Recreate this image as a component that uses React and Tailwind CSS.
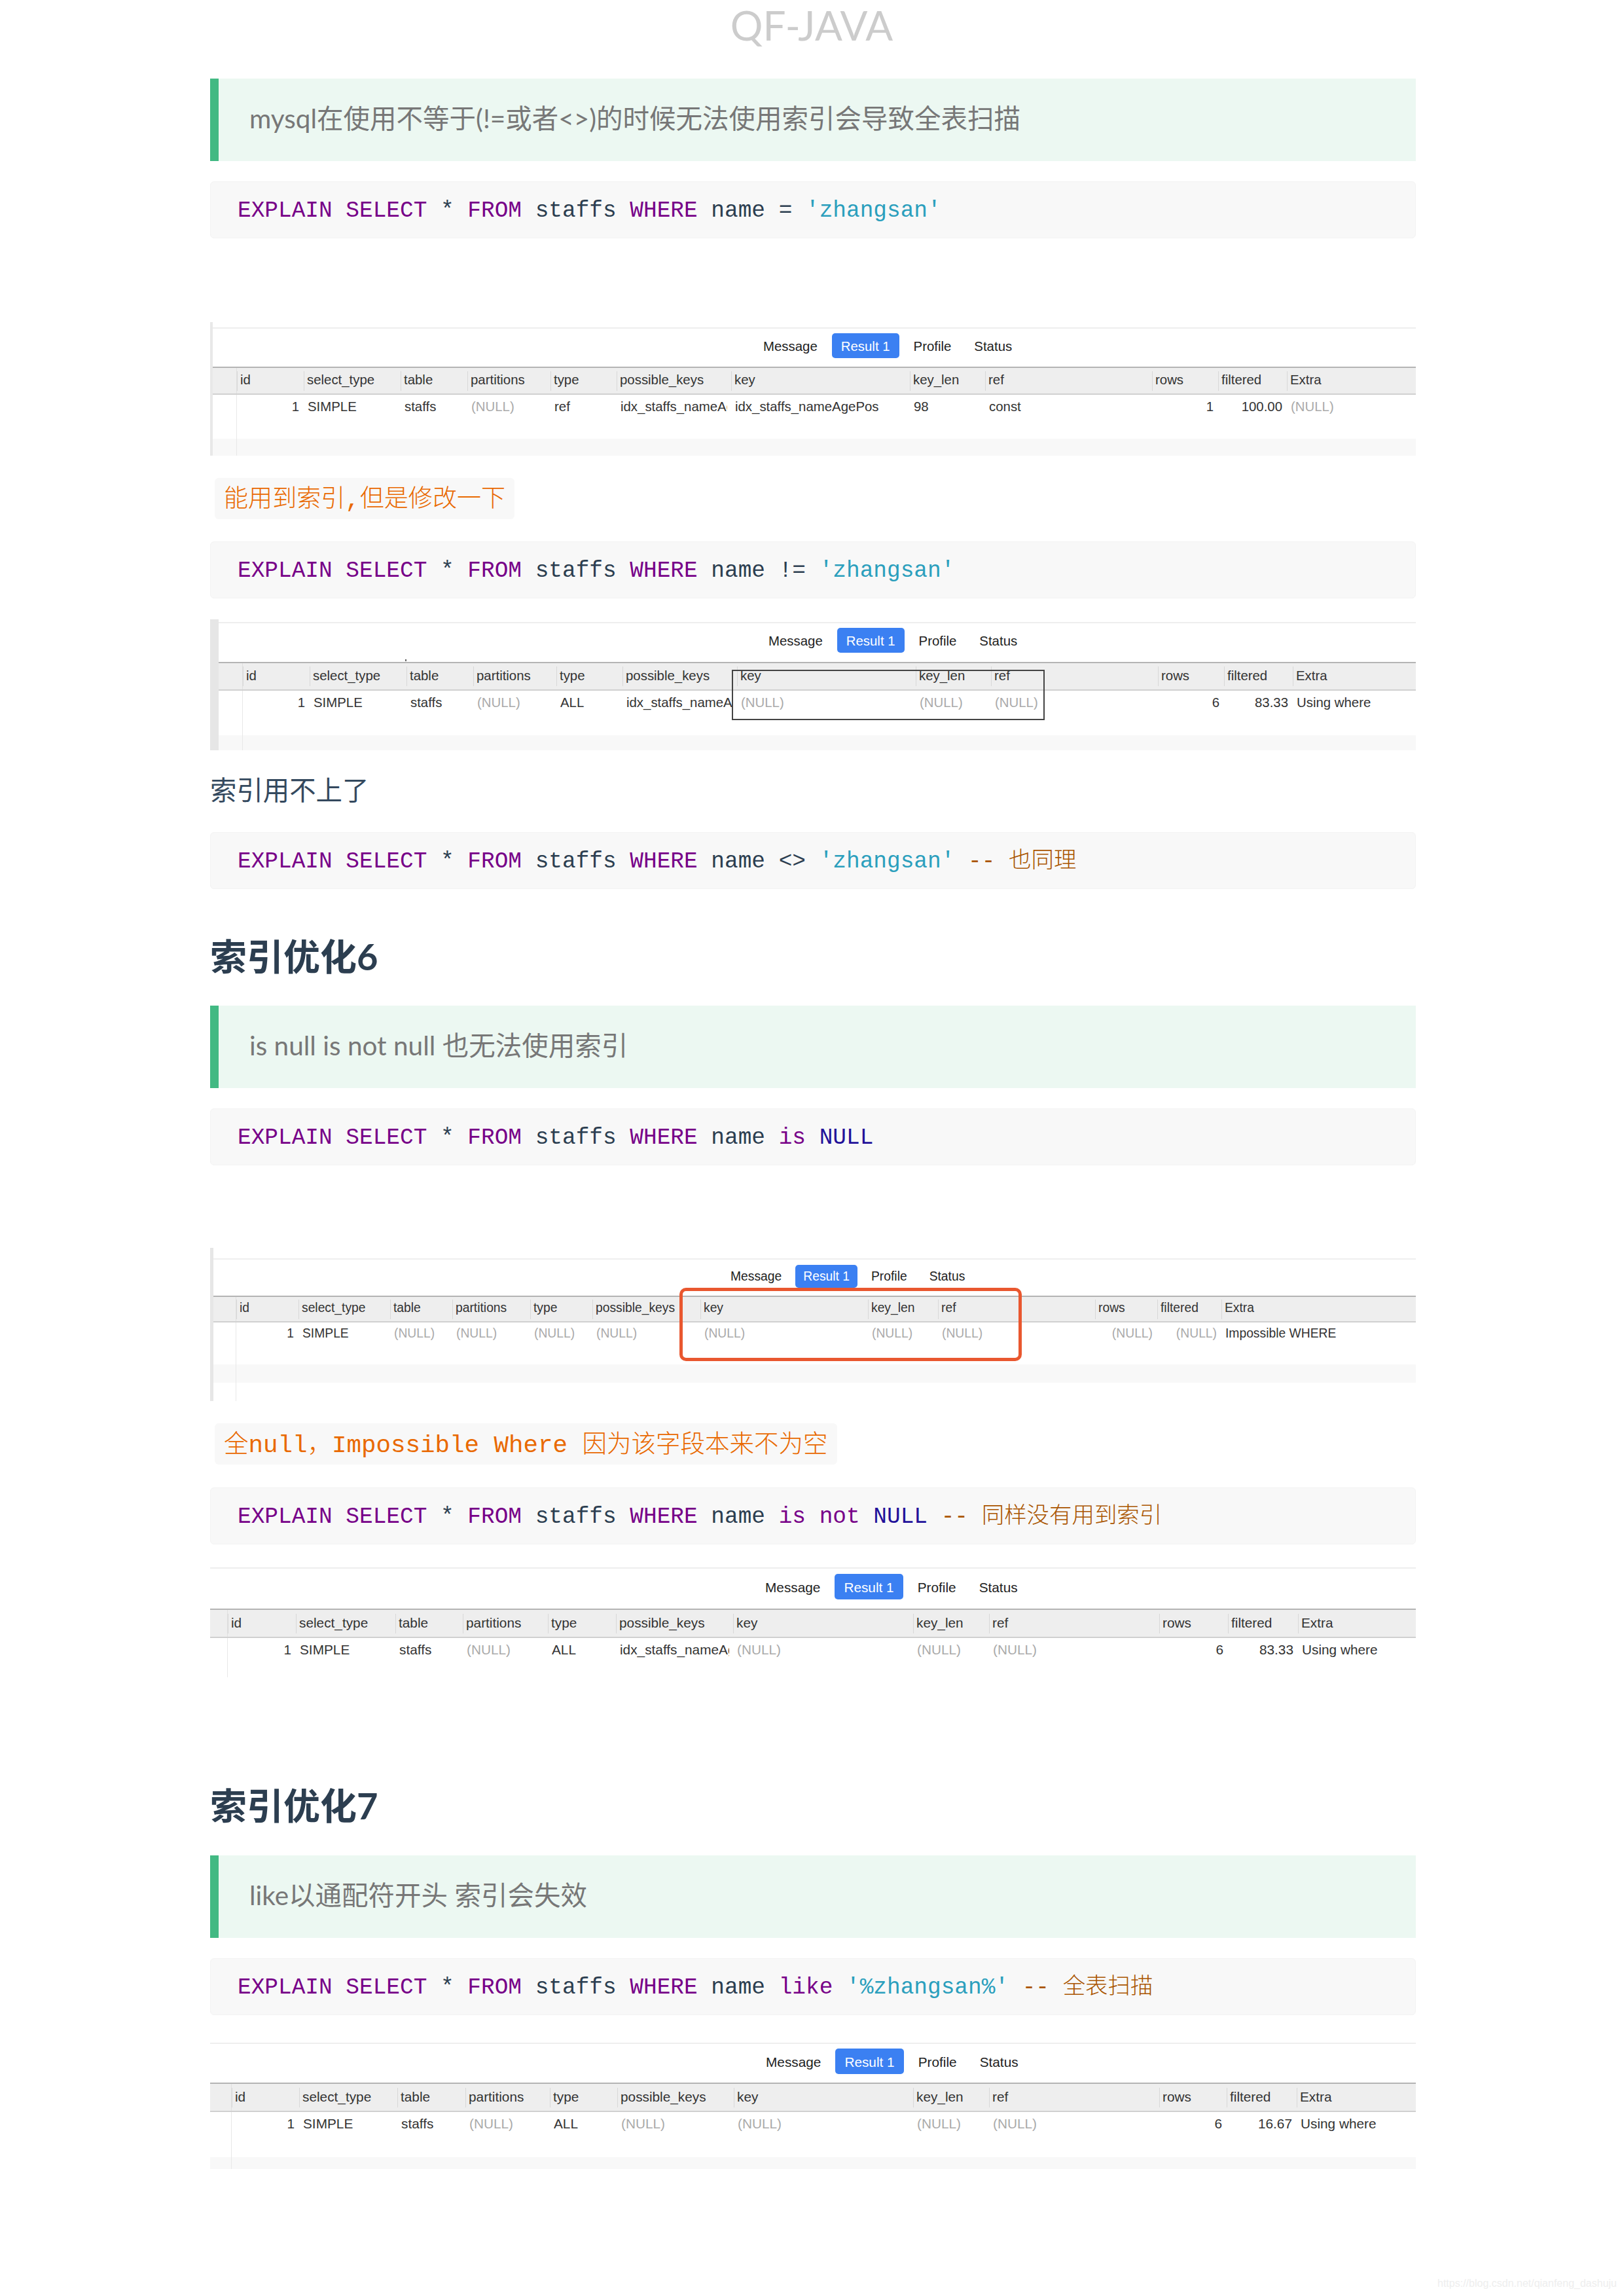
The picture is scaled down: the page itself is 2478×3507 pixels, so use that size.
import React from 'react';

const sansCn = "font-['Lato','Noto_Sans_CJK_SC',sans-serif]";
const monoCn = "font-['Liberation_Mono','Noto_Sans_CJK_SC',monospace]";

const K = ({ children }) => <span className="text-[#770088]">{children}</span>;
const S = ({ children }) => <span className="text-[#2b9fbd]">{children}</span>;
const C = ({ children }) => <span className="font-light text-[#aa5500]">{children}</span>;
const A = ({ children }) => <span className="text-[#221199]">{children}</span>;

const Code = ({ className = 'mt-[31px]', children }) => (
  <div className={`${className} ${monoCn} flex h-[87px] items-center whitespace-pre rounded-[6px] border border-[#f3f3f3] bg-[#f8f8f8] px-[41px] pt-[3px] text-[34.45px] text-[#2c3e50]`}>
    <div>{children}</div>
  </div>
);

const Quote = ({ className, children }) => (
  <div className={`${className} ${sansCn} flex h-[126px] items-center border-l-[13px] border-[#42b983] bg-[#ecf8f2] pb-[4px] pl-[47px] text-[40.5px] text-[#777777]`}>
    {children}
  </div>
);

const Heading = ({ className, children }) => (
  <h2 className={`${className} ${sansCn} flex h-[80px] items-center text-[56px] font-bold text-[#2c3e50]`}>{children}</h2>
);

const Inline = ({ className, children }) => (
  <div className={`${className} ${monoCn} ml-[7px] flex h-[63px] w-fit items-center whitespace-pre rounded-[6px] bg-[#f8f8f8] px-[14px] pt-[6px] font-light text-[#e96900]`}>
    {children}
  </div>
);

const headers = ['id', 'select_type', 'table', 'partitions', 'type', 'possible_keys', 'key', 'key_len', 'ref', 'rows', 'filtered', 'Extra'];
const rightCols = [0, 9, 10];

const Shot = ({ frame, cols, row, tabs, button, textSize, headerH, rowH, spacer, stripe, after, children }) => (
  <div className={`relative ${frame} ${textSize} font-['Liberation_Sans',sans-serif] text-[#333333]`}>
    <div className="border-t-2 border-[#eeeeee]" />
    <div className={`flex ${tabs}`}>
      <span className="self-center pt-[2px] text-[#222222]">Message</span>
      <span className={`flex items-center rounded-[5px] bg-[#3b80f2] pt-[2px] text-white ${button}`}>Result 1</span>
      <span className="self-center pt-[2px] text-[#222222]">Profile</span>
      <span className="ml-[13px] self-center pt-[2px] text-[#222222]">Status</span>
    </div>
    <div className={`grid items-center border-y-2 border-t-[#b4b4b4] border-b-[#d0d0d0] bg-[#eeeeee] ${headerH} ${cols}`}>
      <div className="h-full border-r border-[#e0e0e0]" />
      {headers.map((h) => (
        <div key={h} className="flex h-[30px] items-center overflow-hidden whitespace-nowrap border-l border-[#d8d8d8] pb-[2px] pl-[4px] first-of-type:border-l-0">
          {h}
        </div>
      ))}
    </div>
    <div className={`grid items-center ${rowH} ${cols}`}>
      <div className="h-full border-r border-[#e8e8e8]" />
      {row.map((v, i) => (
        <div
          key={i}
          className={`overflow-hidden whitespace-nowrap ${rightCols.includes(i) ? 'pr-[7px] text-right' : 'ml-[6px] mr-[6px]'} ${v === '(NULL)' ? 'text-[#aaaaaa]' : ''}`}
        >
          {v}
        </div>
      ))}
    </div>
    <div className={`grid ${spacer} ${cols}`}>
      <div className="border-r border-[#e8e8e8]" />
    </div>
    {stripe && (
      <div className={`grid bg-[#f8f8f8] ${stripe} ${cols}`}>
        <div className="border-r border-[#e8e8e8]" />
      </div>
    )}
    {after && (
      <div className={`grid ${after} ${cols}`}>
        <div className="border-r border-[#e8e8e8]" />
      </div>
    )}
    {children}
  </div>
);

const App = () => {
  return (
    <div className="relative h-[3507px] w-full overflow-hidden bg-white">
      <h1 className={`${sansCn} flex h-[76px] items-center justify-center pl-[2px] text-[62px] text-[#cccccc]`}>QF-JAVA</h1>

      <div className="ml-[321px] flex w-[1842px] flex-col">
        <Quote className="mt-[44px]">mysql在使用不等于(!=或者&lt;&gt;)的时候无法使用索引会导致全表扫描</Quote>
        <Code>
          <K>EXPLAIN SELECT</K> * <K>FROM</K> staffs <K>WHERE</K> name = <S>'zhangsan'</S>
        </Code>

        <Shot
          frame="mt-[128px] border-l-[4px] border-[#e8e8e8] pt-[8px]"
          cols="grid-cols-[37px_102px_148px_102px_127px_101px_175px_273px_115px_255px_101px_105px_1fr]"
          row={['1', 'SIMPLE', 'staffs', '(NULL)', 'ref', 'idx_staffs_nameAgePos', 'idx_staffs_nameAgePos', '98', 'const', '1', '100.00', '(NULL)']}
          tabs="mt-[7px] mb-[13px] pl-[841px] gap-[22px]"
          button="h-[38px] px-[14px]"
          textSize="text-[20.4px]"
          headerH="h-[43px]"
          rowH="h-[36px]"
          spacer="h-[31px]"
          stripe="h-[26px]"
        />

        <Inline className="mt-[34px] text-[37.1px]">能用到索引,但是修改一下</Inline>
        <Code className="mt-[34px]">
          <K>EXPLAIN SELECT</K> * <K>FROM</K> staffs <K>WHERE</K> name != <S>'zhangsan'</S>
        </Code>

        <Shot
          frame="mt-[32px] border-l-[13px] border-[#e6e6e6] pt-[4px]"
          cols="grid-cols-[37px_102px_148px_102px_127px_101px_175px_273px_115px_255px_101px_105px_1fr]"
          row={['1', 'SIMPLE', 'staffs', '(NULL)', 'ALL', 'idx_staffs_nameAgePos', '(NULL)', '(NULL)', '(NULL)', '6', '83.33', 'Using where']}
          tabs="mt-[7px] mb-[14px] pl-[840px] gap-[22px]"
          button="h-[38px] px-[14px]"
          textSize="text-[20.4px]"
          headerH="h-[44px]"
          rowH="h-[36px]"
          spacer="h-[32px]"
          stripe="h-[23px]"
        >
          <div className="absolute left-[285px] top-[61px] h-[3px] w-[2px] bg-[#666666]" />
          <div className="absolute left-[784px] top-[77px] h-[77px] w-[478px] border-2 border-[#444444]" />
        </Shot>

        <p className={`${sansCn} mt-[31px] flex h-[60px] items-center text-[40.4px] text-[#34495e]`}>索引用不上了</p>
        <Code className="mt-[34px]">
          <K>EXPLAIN SELECT</K> * <K>FROM</K> staffs <K>WHERE</K> name &lt;&gt; <S>'zhangsan'</S> <C>-- 也同理</C>
        </Code>

        <Heading className="mt-[63px]">索引优化6</Heading>
        <Quote className="mt-[35px]">is null is not null 也无法使用索引</Quote>
        <Code>
          <K>EXPLAIN SELECT</K> * <K>FROM</K> staffs <K>WHERE</K> name <K>is</K> <A>NULL</A>
        </Code>

        <Shot
          frame="mt-[126px] border-l-[5px] border-[#e6e6e6] pt-[16px]"
          cols="grid-cols-[35px_95px_140px_95px_119px_95px_165px_256px_107px_240px_95px_98px_1fr]"
          row={['1', 'SIMPLE', '(NULL)', '(NULL)', '(NULL)', '(NULL)', '(NULL)', '(NULL)', '(NULL)', '(NULL)', '(NULL)', 'Impossible WHERE']}
          tabs="mt-[8px] mb-[12px] pl-[790px] gap-[21px]"
          button="h-[35px] px-[12px]"
          textSize="text-[19.3px]"
          headerH="h-[41px]"
          rowH="h-[34px]"
          spacer="h-[30px]"
          stripe="h-[28px]"
          after="h-[28px]"
        >
          <div className="absolute left-[712px] top-[61px] h-[112px] w-[523px] rounded-[10px] border-[5px] border-[#e9572f]" />
        </Shot>

        <Inline className="mt-[34px] text-[37.5px]">全null，Impossible Where 因为该字段本来不为空</Inline>
        <Code className="mt-[35px]">
          <K>EXPLAIN SELECT</K> * <K>FROM</K> staffs <K>WHERE</K> name <K>is</K> <K>not</K> <A>NULL</A> <C>-- 同样没有用到索引</C>
        </Code>

        <Shot
          frame="mt-[35px]"
          cols="grid-cols-[27px_104px_152px_103px_130px_104px_179px_275px_116px_260px_105px_107px_1fr]"
          row={['1', 'SIMPLE', 'staffs', '(NULL)', 'ALL', 'idx_staffs_nameAgePos', '(NULL)', '(NULL)', '(NULL)', '6', '83.33', 'Using where']}
          tabs="mt-[8px] mb-[14px] pl-[848px] gap-[22px]"
          button="h-[39px] px-[14px]"
          textSize="text-[20.8px]"
          headerH="h-[45px]"
          rowH="h-[36px]"
          spacer="h-[24px]"
        />

        <Heading className="mt-[156px]">索引优化7</Heading>
        <Quote className="mt-[36px]">like以通配符开头 索引会失效</Quote>
        <Code>
          <K>EXPLAIN SELECT</K> * <K>FROM</K> staffs <K>WHERE</K> name <K>like</K> <S>'%zhangsan%'</S> <C>-- 全表扫描</C>
        </Code>

        <Shot
          frame="mt-[42px]"
          cols="grid-cols-[33px_103px_150px_104px_129px_103px_178px_274px_116px_260px_103px_107px_1fr]"
          row={['1', 'SIMPLE', 'staffs', '(NULL)', 'ALL', '(NULL)', '(NULL)', '(NULL)', '(NULL)', '6', '16.67', 'Using where']}
          tabs="mt-[7px] mb-[13px] pl-[849px] gap-[22px]"
          button="h-[39px] px-[14px]"
          textSize="text-[20.8px]"
          headerH="h-[45px]"
          rowH="h-[36px]"
          spacer="h-[33px]"
          stripe="h-[18px]"
        />
      </div>

      <div className="absolute bottom-[7px] right-[8px] font-['Liberation_Sans',sans-serif] text-[16px] text-[#eeeeee]">
        https://blog.csdn.net/qianfeng_dashuju
      </div>
    </div>
  );
};

export default App;
